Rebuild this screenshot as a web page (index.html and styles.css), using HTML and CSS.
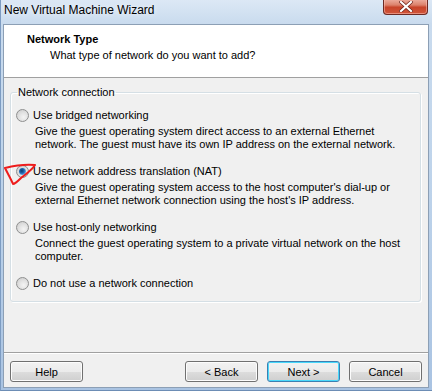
FILE: index.html
```html
<!DOCTYPE html>
<html lang="en">
<head>
    <meta charset="UTF-8">
    <title>New Virtual Machine Wizard</title>
    <link rel="stylesheet" href="styles.css">
</head>
<body>
    <div class="window">
        <div class="titlebar">
            <span class="title">New Virtual Machine Wizard</span>
            <span class="close-btn">
                <svg width="14" height="11" viewBox="0 0 14 11">
                    <path d="M2 1 L12 10 M12 1 L2 10" stroke="#6b2118" stroke-width="3.6" stroke-linecap="square"/>
                    <path d="M2 1 L12 10 M12 1 L2 10" stroke="#ffffff" stroke-width="2.2" stroke-linecap="square"/>
                </svg>
            </span>
        </div>

        <div class="client">
            <div class="header">
                <div class="header-title">Network Type</div>
                <div class="header-sub">What type of network do you want to add?</div>
            </div>

            <fieldset class="group">
                <legend>Network connection</legend>

                <div class="option">
                    <div class="radio-row"><span class="radio"></span>Use bridged networking</div>
                    <p class="desc">Give the guest operating system direct access to an external Ethernet<br>network. The guest must have its own IP address on the external network.</p>
                </div>

                <div class="option">
                    <div class="radio-row"><span class="radio checked"></span>Use network address translation (NAT)</div>
                    <p class="desc">Give the guest operating system access to the host computer's dial-up or<br>external Ethernet network connection using the host's IP address.</p>
                </div>

                <div class="option">
                    <div class="radio-row"><span class="radio"></span>Use host-only networking</div>
                    <p class="desc">Connect the guest operating system to a private virtual network on the host<br>computer.</p>
                </div>

                <div class="option last">
                    <div class="radio-row"><span class="radio"></span>Do not use a network connection</div>
                </div>
            </fieldset>

            <div class="separator"></div>

            <div class="footer">
                <button class="btn">Help</button>
                <div class="footer-right">
                    <button class="btn">&lt; Back</button>
                    <button class="btn default">Next &gt;</button>
                    <button class="btn">Cancel</button>
                </div>
            </div>
        </div>

        <!-- red pen mark around the selected option -->
        <svg class="pen-mark" width="40" height="26" viewBox="0 0 40 26">
            <path d="M4 5 C 12 3, 24 1, 34 2 C 31 7, 25 11, 20 15 C 17 18, 14 21, 12 21 C 10 16, 7 11, 4 5 Z"
                  fill="none" stroke="#ee1c1c" stroke-width="2" stroke-linejoin="round"/>
        </svg>
    </div>
</body>
</html>
```

FILE: styles.css
```css
:root {
    --frame: #b9d1ea;
    --client-bg: #f0f0f0;
    --border: #a0a0a0;
    --text: #000000;
}

body {
    margin: 0;
    font-family: 'Liberation Sans', Arial, sans-serif;
    font-size: 11px;
    color: var(--text);
}

.window {
    position: relative;
    width: 432px;
    height: 391px;
    background: linear-gradient(to bottom, #dce8f5 0px, #c9dbee 24px, #bcd2ea 200px, #a9c3e2 391px);
    display: flex;
    flex-direction: column;
    box-sizing: border-box;
    border-left: 1px solid #7d9cc2;
    border-bottom: 1px solid #6d8db5;
    overflow: hidden;
}

.titlebar {
    height: 24px;
    position: relative;
    flex-shrink: 0;
}

.title {
    position: absolute;
    left: 3px;
    top: 3px;
    font-size: 12px;
    line-height: 15px;
    color: #000;
    text-shadow: 0 0 6px rgba(255, 255, 255, 0.9);
}

.close-btn {
    position: absolute;
    left: 382px;
    top: -1px;
    width: 45px;
    height: 16px;
    box-sizing: border-box;
    border: 1px solid #6c2a23;
    border-top: none;
    border-radius: 0 0 4px 4px;
    background: linear-gradient(to bottom, #eeb0a2 0%, #dc826c 40%, #c8442a 55%, #d0553a 100%);
    box-shadow: inset 0 0 0 1px rgba(255, 200, 190, 0.5);
    display: flex;
    align-items: center;
    justify-content: center;
}

.client {
    margin-left: 2px;
    width: 426px;
    height: 364px;
    box-sizing: border-box;
    background: var(--client-bg);
    border: 1px solid #8c9fb5;
    display: flex;
    flex-direction: column;
}

.header {
    background: #ffffff;
    height: 53px;
    box-sizing: border-box;
    border-bottom: 1px solid var(--border);
    padding: 8px 0 0 23px;
    line-height: 13px;
}

.header-title {
    font-weight: bold;
}

.header-sub {
    margin-top: 3px;
    padding-left: 23px;
}

.group {
    margin: 8px 7px 0 6px;
    padding: 7px 5px 9px 5px;
    border: 1px solid #d5dfe5;
    border-radius: 3px;
    box-shadow: inset 1px 1px 0 #fff, 1px 1px 0 #fff;
    min-width: 0;
}

.group legend {
    padding: 0 1px;
    margin-left: 1px;
    line-height: 13px;
}

.option {
    margin-bottom: 11px;
}

.option.last {
    margin-bottom: 0;
}

.radio-row {
    display: flex;
    align-items: center;
    gap: 4px;
    line-height: 18px;
    height: 18px;
}

.radio {
    width: 13px;
    height: 13px;
    box-sizing: border-box;
    border-radius: 50%;
    border: 1px solid #8e8f8f;
    background: radial-gradient(circle at 60% 65%, #f4f4f4 0%, #e2e2e2 45%, #c8c8c8 100%);
    flex-shrink: 0;
    position: relative;
}

.radio.checked::after {
    content: "";
    position: absolute;
    left: 2px;
    top: 2px;
    width: 7px;
    height: 7px;
    border-radius: 50%;
    background: radial-gradient(circle at 40% 40%, #0c3b6e 0%, #1f66b0 40%, #6fb3ec 75%, #a9d3f5 100%);
}

.desc {
    margin: 1px 0 0 0;
    padding-left: 19px;
    line-height: 13px;
}

.separator {
    margin-top: auto;
    height: 0;
    border-top: 1px solid var(--border);
    border-bottom: 1px solid #ffffff;
}

.footer {
    display: flex;
    justify-content: space-between;
    padding: 7px 6px 5px 6px;
}

.footer-right {
    display: flex;
    gap: 9px;
}

.btn {
    width: 73px;
    height: 21px;
    box-sizing: border-box;
    font-family: 'Liberation Sans', Arial, sans-serif;
    font-size: 11px;
    color: #000;
    border: 1px solid #707070;
    border-radius: 3px;
    background: linear-gradient(to bottom, #f2f2f2 0%, #ebebeb 50%, #dddddd 51%, #cfcfcf 100%);
    box-shadow: inset 0 0 0 1px #fcfcfc;
    padding: 0;
}

.btn.default {
    border-color: #3c7fb1;
    box-shadow: inset 0 0 0 1px #48d8fb;
}

.pen-mark {
    position: absolute;
    left: 0;
    top: 163px;
}
```
